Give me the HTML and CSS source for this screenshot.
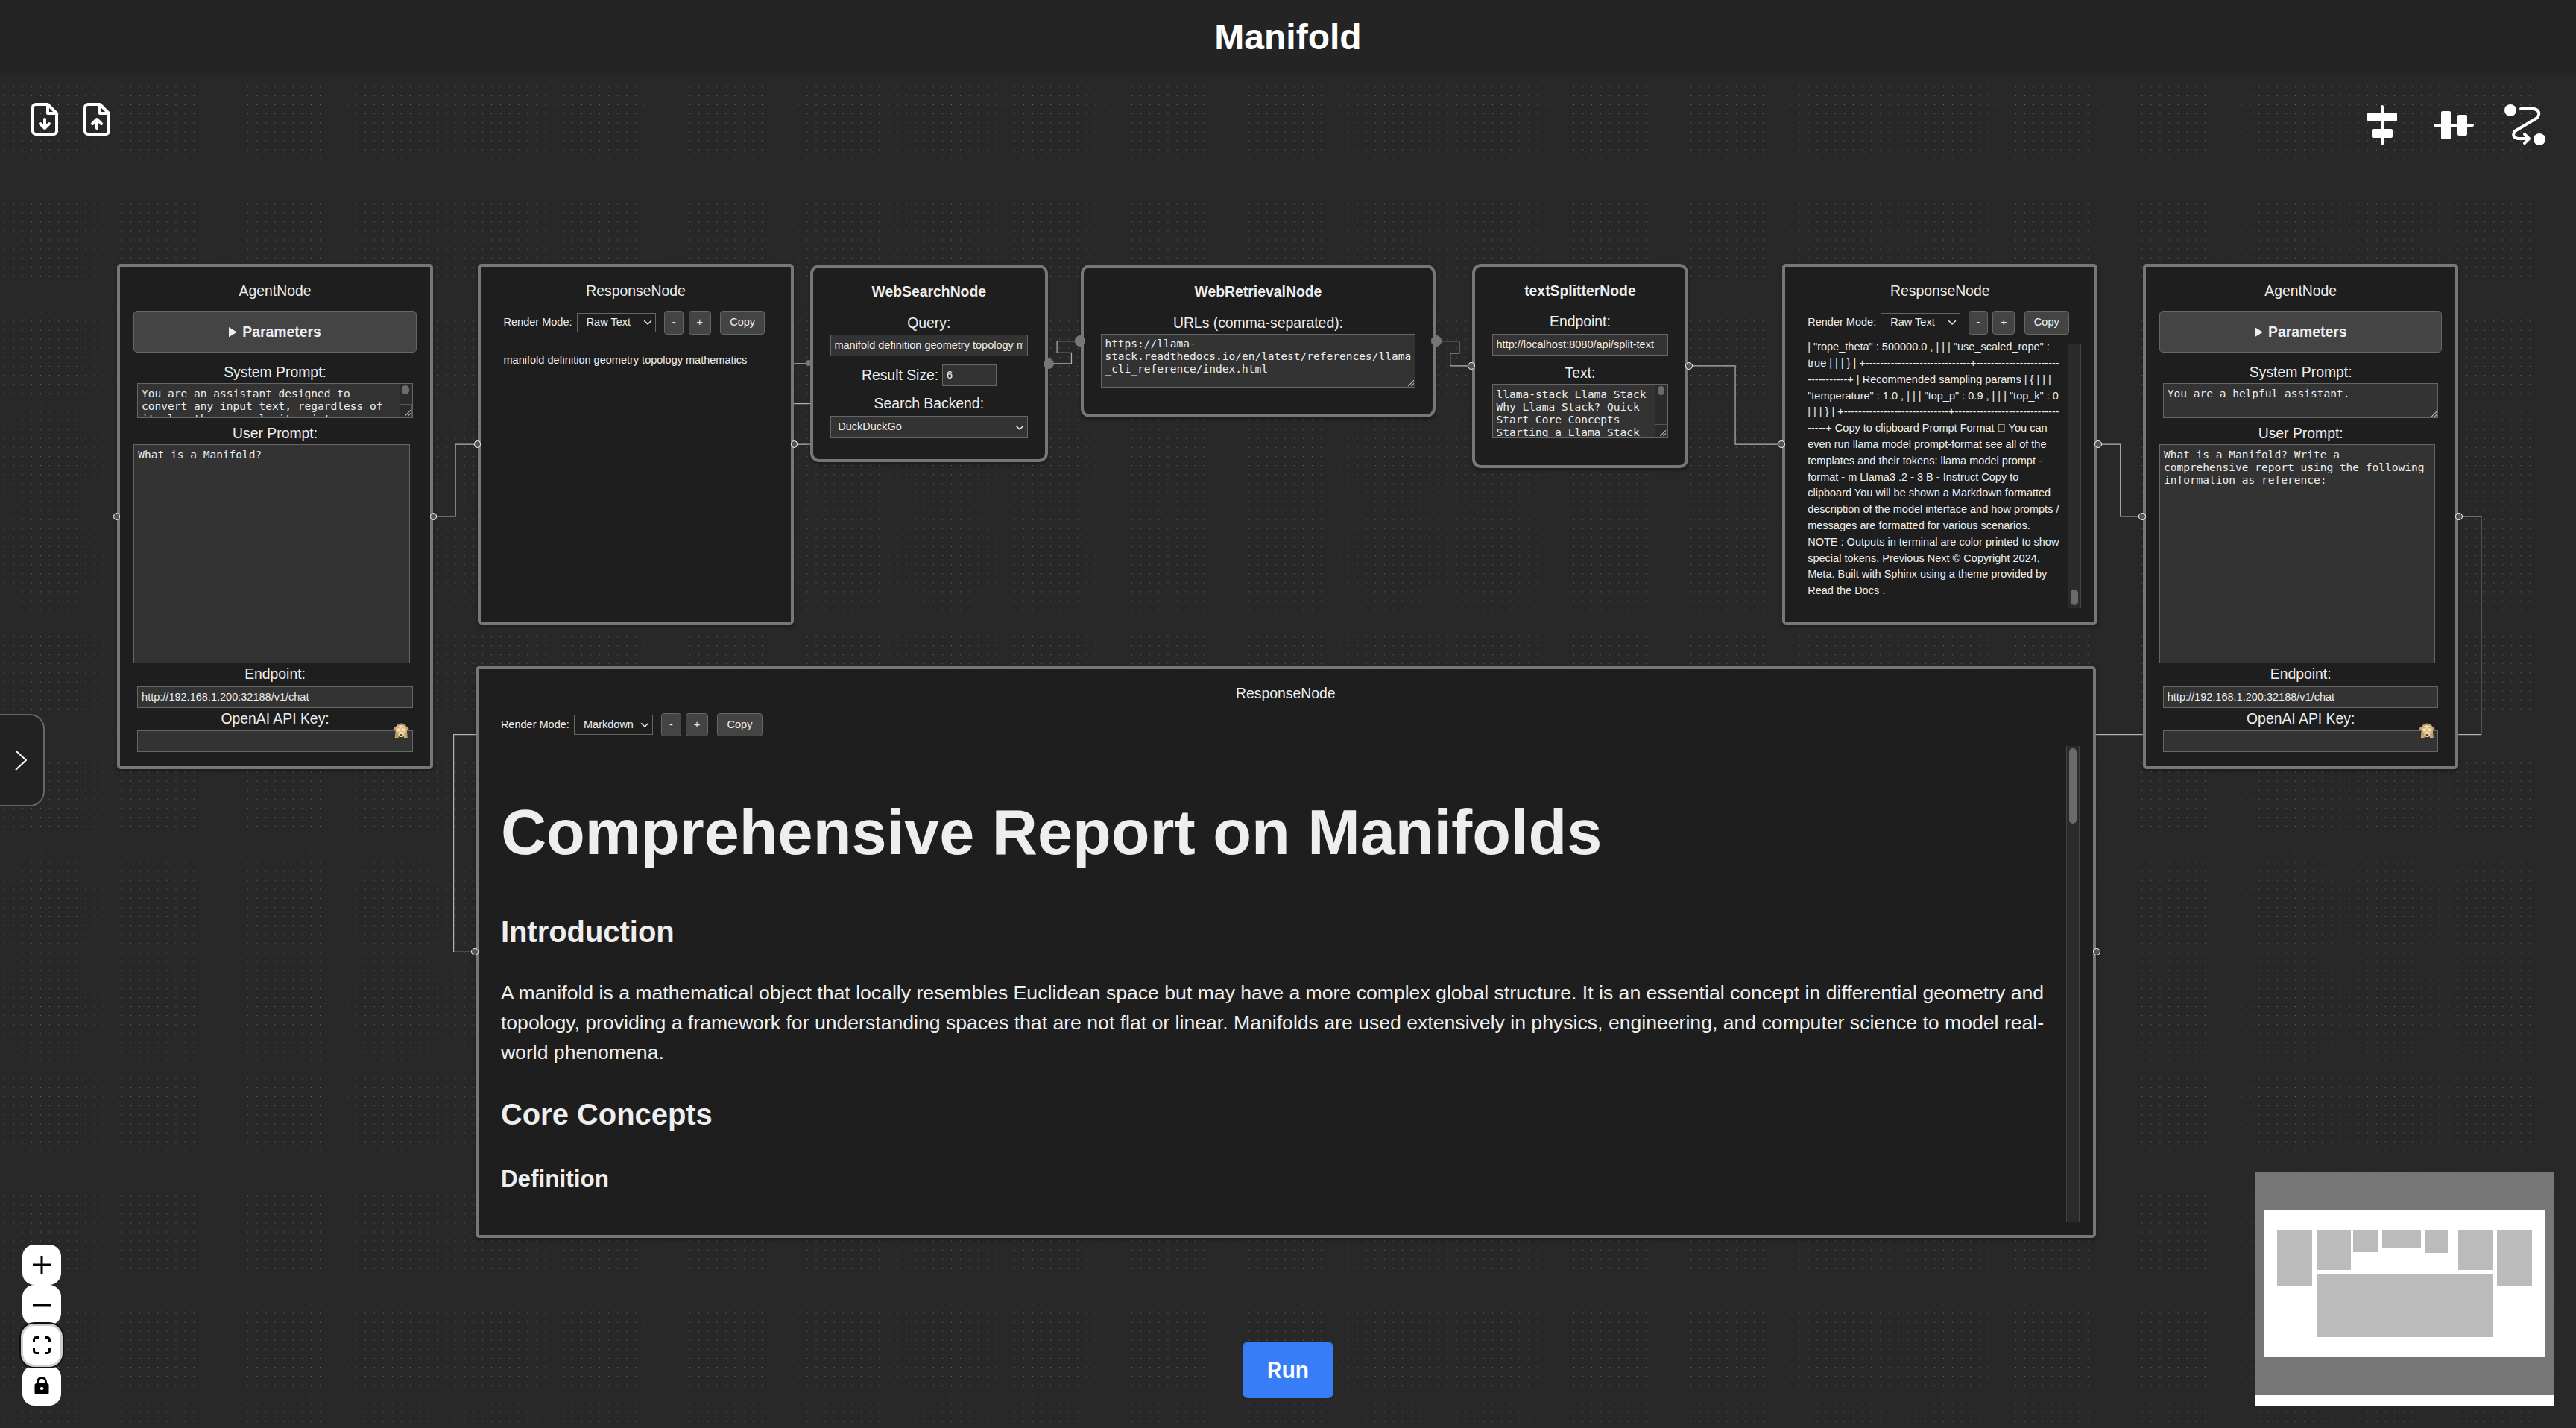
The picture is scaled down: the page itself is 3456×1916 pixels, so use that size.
FILE: index.html
```html
<!DOCTYPE html>
<html lang="en">
<head>
<meta charset="utf-8">
<title>Manifold</title>
<link rel="stylesheet" href="styles.css">
</head>
<body>
<svg class="symbols" aria-hidden="true">
  <symbol id="chevron-down" viewBox="0 0 10 6"><path d="M1 1l4 4 4-4" fill="none" stroke="#eee" stroke-width="1.2"/></symbol>
  <symbol id="grip" viewBox="0 0 8 8"><path d="M1 7.500L7.500 1M4.500 7.500L7.500 4.500" fill="none" stroke="#bbb" stroke-width="0.900"/></symbol>
  <symbol id="triangle" viewBox="0 0 9 11"><path d="M0 0L9 5.500L0 11Z" fill="#eee"/></symbol>
  <symbol id="monkey" viewBox="0 0 20 20">
    <circle cx="2.300" cy="7.500" r="2.300" fill="#d09a86"/><circle cx="17.700" cy="7.500" r="2.300" fill="#d09a86"/>
    <path d="M10 0.500C4.500 0.500 2.500 4 2.500 9c0 5 3 9.500 7.500 9.500s7.500-4.500 7.500-9.500C17.500 4 15.500 .5 10 .5Z" fill="#b8925c"/>
    <path d="M4 5q6-4 12 0v5H4Z" fill="#ecd6a8"/>
    <ellipse cx="10" cy="14.500" rx="4" ry="4" fill="#ecd6a8"/>
    <path d="M7.800 15.500q2.200-1.600 4.400 0q-2.200 2.600-4.400 0Z" fill="#5d3a24"/>
    <path d="M3 6C5 4 8 5 9.500 8L9 11.500 6.500 12.500 6.500 19.500H1.800L2.500 12Z" fill="#d6b177"/>
    <path d="M17 6C15 4 12 5 10.500 8L11 11.500 13.500 12.500 13.500 19.500H18.200L17.500 12Z" fill="#d6b177"/>
    <path d="M4 8q2.500-2 5 0v2.500l-3.500 1ZM16 8q-2.500-2-5 0v2.500l3.500 1Z" fill="#f3e3c2"/>
    <path d="M3.300 13v6M5 13v6M15 13v6M16.700 13v6" stroke="#9b7440" stroke-width=".5"/>
  </symbol>
</svg>

<header class="topbar"><h1 class="brand">Manifold</h1></header>

<main class="canvas">
  <div class="viewport">
    <svg class="wires" aria-hidden="true">
      <defs><pattern id="dots" width="10" height="10" patternUnits="userSpaceOnUse"><circle cx="5" cy="3.500" r="0.500" fill="#777"/></pattern></defs>
      <rect y="10" width="100%" height="100%" fill="url(#dots)"/>
      <g class="edges">
        <path d="M480 490H505V410H530"/>
        <path d="M880 410H900V365H878V320.500H898"/>
        <path d="M1162 320.500H1188V308.500H1172V295.500H1198"/>
        <path d="M1592 295.500H1618V309H1608V323H1632"/>
        <path d="M1872 323H1924V410H1976"/>
        <path d="M2326 410H2351V490H2376"/>
        <path d="M2726 490H2751V732H503V973H527"/>
      </g>
    </svg>

    <section class="node agent" style="left:130px;top:210px">
      <h2 class="node-title">AgentNode</h2>
      <button class="params" type="button"><svg class="tri"><use href="#triangle"/></svg>Parameters</button>
      <label for="sys1">System Prompt:</label>
      <div class="field inset">
        <textarea id="sys1" class="sys">You are an assistant designed to
convert any input text, regardless of
its length or complexity, into a</textarea>
        <span class="bar small"><span class="thumb"></span></span><span class="corner"><svg class="grip"><use href="#grip"/></svg></span>
      </div>
      <label for="usr1">User Prompt:</label>
      <textarea id="usr1" class="usr">What is a Manifold?</textarea>
      <label for="end1">Endpoint:</label>
      <div class="field inset"><input id="end1" type="text" value="http://192.168.1.200:32188/v1/chat"></div>
      <label for="key1">OpenAI API Key:</label>
      <div class="field inset"><input id="key1" type="password"><button class="peek" type="button" aria-label="Show key"><svg><use href="#monkey"/></svg></button></div>
      <i class="handle left"></i><i class="handle right"></i>
    </section>

    <section class="node response" style="left:530px;top:210px">
      <h2 class="node-title">ResponseNode</h2>
      <div class="tools">
        <label for="mode1">Render Mode:</label>
        <span class="select"><select id="mode1"><option>Raw Text</option></select><svg><use href="#chevron-down"/></svg></span>
        <button class="minus" type="button">-</button><button class="plus" type="button">+</button><button class="copy" type="button">Copy</button>
      </div>
      <div class="output">manifold definition geometry topology mathematics</div>
      <i class="handle left"></i><i class="handle right"></i>
    </section>

    <section class="node compact search" style="left:898px;top:211px">
      <h2 class="node-title">WebSearchNode</h2>
      <label for="query">Query:</label>
      <input id="query" type="text" value="manifold definition geometry topology mathematics">
      <div class="pair"><label for="size">Result Size:</label><input id="size" type="text" value="6"></div>
      <label for="backend">Search Backend:</label>
      <span class="select wide"><select id="backend"><option>DuckDuckGo</option></select><svg><use href="#chevron-down"/></svg></span>
      <i class="handle dot tiny left"></i><i class="handle dot right"></i>
    </section>

    <section class="node compact retrieval" style="left:1198px;top:211px">
      <h2 class="node-title">WebRetrievalNode</h2>
      <label for="urls">URLs (comma-separated):</label>
      <div class="field"><textarea id="urls" class="block">https://llama-
stack.readthedocs.io/en/latest/references/llama
_cli_reference/index.html</textarea><svg class="grip"><use href="#grip"/></svg></div>
      <i class="handle dot left"></i><i class="handle dot right"></i>
    </section>

    <section class="node compact splitter" style="left:1632px;top:210px">
      <h2 class="node-title">textSplitterNode</h2>
      <label for="split">Endpoint:</label>
      <input id="split" type="text" value="http://localhost:8080/api/split-text">
      <label for="text" class="spaced">Text:</label>
      <div class="field"><textarea id="text" class="block">llama-stack Llama Stack
Why Llama Stack? Quick
Start Core Concepts
Starting a Llama Stack</textarea>
        <span class="bar small"><span class="thumb"></span></span><span class="corner"><svg class="grip"><use href="#grip"/></svg></span></div>
      <i class="handle left"></i><i class="handle right"></i>
    </section>

    <section class="node response" style="left:1976px;top:210px">
      <h2 class="node-title">ResponseNode</h2>
      <div class="tools">
        <label for="mode2">Render Mode:</label>
        <span class="select"><select id="mode2"><option>Raw Text</option></select><svg><use href="#chevron-down"/></svg></span>
        <button class="minus" type="button">-</button><button class="plus" type="button">+</button><button class="copy" type="button">Copy</button>
      </div>
      <div class="scroll">
        <div class="output end"><p class="raw">| "rope_theta" : 500000.0 , | | | "use_scaled_rope" :
true | | | } | +-----------------------------+-----------------------
-----------+ | Recommended sampling params | { | | |
"temperature" : 1.0 , | | | "top_p" : 0.9 , | | | "top_k" : 0
| | | } | +-----------------------------+-----------------------------
-----+ Copy to clipboard Prompt Format &#xf0c1; You can
even run llama model prompt-format see all of the
templates and their tokens: llama model prompt -
format - m Llama3 .2 - 3 B - Instruct Copy to
clipboard You will be shown a Markdown formatted
description of the model interface and how prompts /
messages are formatted for various scenarios.
NOTE : Outputs in terminal are color printed to show
special tokens. Previous Next © Copyright 2024,
Meta. Built with Sphinx using a theme provided by
Read the Docs .</p></div>
        <div class="track bottom"><span class="thumb"></span></div>
      </div>
      <i class="handle left"></i><i class="handle right"></i>
    </section>

    <section class="node agent" style="left:2376px;top:210px">
      <h2 class="node-title">AgentNode</h2>
      <button class="params" type="button"><svg class="tri"><use href="#triangle"/></svg>Parameters</button>
      <label for="sys2">System Prompt:</label>
      <div class="field inset"><textarea id="sys2" class="sys">You are a helpful assistant.</textarea><svg class="grip"><use href="#grip"/></svg></div>
      <label for="usr2">User Prompt:</label>
      <textarea id="usr2" class="usr">What is a Manifold? Write a
comprehensive report using the following
information as reference:</textarea>
      <label for="end2">Endpoint:</label>
      <div class="field inset"><input id="end2" type="text" value="http://192.168.1.200:32188/v1/chat"></div>
      <label for="key2">OpenAI API Key:</label>
      <div class="field inset"><input id="key2" type="password"><button class="peek" type="button" aria-label="Show key"><svg><use href="#monkey"/></svg></button></div>
      <i class="handle left"></i><i class="handle right"></i>
    </section>

    <section class="node response report" style="left:527px;top:656px">
      <h2 class="node-title">ResponseNode</h2>
      <div class="tools">
        <label for="mode3">Render Mode:</label>
        <span class="select"><select id="mode3"><option>Markdown</option></select><svg><use href="#chevron-down"/></svg></span>
        <button class="minus" type="button">-</button><button class="plus" type="button">+</button><button class="copy" type="button">Copy</button>
      </div>
      <div class="scroll">
        <article class="output markdown">
          <h1>Comprehensive Report on Manifolds</h1>
          <h2>Introduction</h2>
          <p>A manifold is a mathematical object that locally resembles Euclidean space but may have a more complex global structure. It is an essential concept in differential geometry and topology, providing a framework for understanding spaces that are not flat or linear. Manifolds are used extensively in physics, engineering, and computer science to model real-world phenomena.</p>
          <h2>Core Concepts</h2>
          <h3>Definition</h3>
        </article>
        <div class="track"><span class="thumb long"></span></div>
      </div>
      <i class="handle left"></i><i class="handle right"></i>
    </section>
  </div>

  <div class="files">
    <button class="icon" type="button" aria-label="Save"><svg viewBox="0 0 24 24"><path d="M14 2H6a2 2 0 0 0-2 2v16a2 2 0 0 0 2 2h12a2 2 0 0 0 2-2V8ZM14 2v6h6M12 12v6M9 15l3 3 3-3"/></svg></button>
    <button class="icon" type="button" aria-label="Load"><svg viewBox="0 0 24 24"><path d="M14 2H6a2 2 0 0 0-2 2v16a2 2 0 0 0 2 2h12a2 2 0 0 0 2-2V8ZM14 2v6h6M12 18v-6M9 15l3-3 3 3"/></svg></button>
  </div>

  <div class="layouts">
    <button class="icon" type="button" aria-label="Layout vertically"><svg class="solid" viewBox="0 0 56 56"><rect x="26" y="1" width="4" height="54" rx="2"/><rect x="8" y="11" width="40" height="12" rx="2"/><rect x="14" y="33" width="28" height="12" rx="2"/></svg></button>
    <button class="icon" type="button" aria-label="Layout horizontally"><svg class="solid" viewBox="0 0 56 56"><rect x="1" y="26" width="54" height="4" rx="2"/><rect x="11" y="9" width="13" height="38" rx="2"/><rect x="33" y="14" width="13" height="28" rx="2"/></svg></button>
    <button class="icon" type="button" aria-label="Route edges"><svg viewBox="0 0 56 56"><circle cx="8" cy="8" r="8" fill="#fff" stroke="none"/><circle cx="47" cy="47" r="8" fill="#fff" stroke="none"/><path stroke-width="4" d="M22 6h18q10 3 4 12L14 36q-5 8 4 10h14M27 40l6 6-6 6"/></svg></button>
  </div>

  <button class="drawer" type="button" aria-label="Open palette"><svg viewBox="0 0 16 28"><path d="M1 1l14 13L1 27"/></svg></button>

  <div class="zoomer">
    <button type="button" aria-label="Zoom in"><svg viewBox="0 0 24 24"><path d="M0 10.500h10.500V0h3v10.500H24v3H13.500V24h-3V13.500H0z"/></svg></button>
    <button type="button" aria-label="Zoom out"><svg viewBox="0 0 24 24"><path d="M0 10.500h24v3H0z"/></svg></button>
    <button type="button" class="focused" aria-label="Fit view"><svg viewBox="0 0 24 24"><path d="M1.500 8V4.500a3 3 0 0 1 3-3H8M16 1.500h3.500a3 3 0 0 1 3 3V8M22.500 16v3.500a3 3 0 0 1-3 3H16M8 22.500H4.500a3 3 0 0 1-3-3V16" fill="none" stroke="#000" stroke-width="3"/></svg></button>
    <button type="button" aria-label="Lock"><svg viewBox="0 0 24 24"><path fill-rule="evenodd" d="M5 9V7a7 7 0 0 1 14 0v2q2.500 0 2.500 2.500V21.500Q21.500 24 19 24H5Q2.500 24 2.500 21.500V11.500Q2.500 9 5 9ZM8 9h8V7a4 4 0 0 0-8 0ZM12 14a2.500 2 0 1 0 .1 0Z"/></svg></button>
  </div>

  <button class="run" type="button">Run</button>

  <div class="minimap">
    <svg viewBox="0 0 400 300" aria-label="Mini map">
      <rect width="400" height="300" fill="#777"/>
      <rect x="12" y="52" width="376" height="197" fill="#fff"/>
      <g fill="#bbb">
        <rect x="29" y="79" width="47" height="74"/><rect x="82" y="79" width="46" height="53"/>
        <rect x="131" y="79" width="34" height="29"/><rect x="170" y="79" width="52" height="23"/>
        <rect x="227" y="79" width="31" height="30"/><rect x="272" y="79" width="46" height="53"/>
        <rect x="324" y="79" width="47" height="74"/><rect x="82" y="138" width="236" height="84"/>
      </g>
    </svg>
  </div>
</main>
</body>
</html>
```
FILE: styles.css
```css
* { box-sizing: border-box; }

body {
  margin: 0;
  min-height: 100vh;
  display: flex;
  flex-direction: column;
  background: #242424;
  color: #eee;
  font-family: "Liberation Sans", Arial, sans-serif;
}

button, input, select, textarea { font: inherit; color: inherit; margin: 0; }
button { cursor: pointer; }
.symbols { position: absolute; width: 0; height: 0; }

.topbar {
  display: flex;
  align-items: center;
  justify-content: center;
  height: 100px;
}
.brand { margin: 0; font-size: 48px; line-height: 56px; color: #fff; }

.canvas {
  flex: 1;
  position: relative;
  overflow: hidden;
  background: #282828;
}

/* Current zoom level of the flow editor; nodes use flow coordinates. */
.viewport { position: absolute; inset: 0; zoom: 1.21; font-size: 16px; line-height: 24px; }
.wires { position: absolute; width: 100%; height: 100%; }
.edges path { fill: none; stroke: #b1b1b7; stroke-width: 1; }

/* Nodes */
.node {
  position: absolute;
  display: flex;
  flex-direction: column;
  padding: 15px;
  background: #1e1e1e;
  border: 4px solid #777;
  border-radius: 4px;
  box-shadow: 0 2px 4px rgba(0, 0, 0, 0.3);
}
.node-title { margin: 0 0 10px; font-size: 16px; line-height: 24px; font-weight: 400; text-align: center; }
.node label { display: block; text-align: center; }
.agent { width: 350px; height: 560px; }
.response { width: 350px; height: 400px; }
.report { width: 1797px; height: 634px; }

.compact { padding: 15px 19px; border-radius: 10px; }
.compact .node-title { font-weight: 700; }
.search { width: 264px; height: 219px; }
.retrieval { width: 394px; height: 169px; }
.splitter { width: 240px; height: 226px; }
.spaced { margin-top: 8px; }

input, textarea {
  display: block;
  width: 100%;
  padding: 4px;
  border: 1px solid #666;
  border-radius: 0;
  background: #333;
  outline: 0;
  font-size: 12px;
}
input { height: 24px; line-height: 14px; padding: 1px 4px; margin-top: 1px; }
textarea {
  font-family: "DejaVu Sans Mono", monospace;
  line-height: 14px;
  resize: none;
  overflow: hidden;
  white-space: pre;
}
.field { position: relative; }
.inset { margin: 0 4px; }

.params {
  display: flex;
  align-items: center;
  justify-content: center;
  gap: 6px;
  height: 46px;
  margin-bottom: 10px;
  background: #444;
  border: 1px solid #666;
  border-radius: 4px;
  font-weight: 700;
}
.tri { width: 9px; height: 11px; }
.sys { height: 39px; }
.inset:has(.sys) { margin-bottom: 5px; }
.usr { width: 306px; height: 243px; }
.block { height: 60px; }

.peek {
  position: absolute;
  right: 4px;
  top: -7px;
  padding: 0;
  border: 0;
  background: none;
  line-height: 0;
}
.peek svg { width: 17px; height: 17px; }

.grip { position: absolute; right: 1px; bottom: 1px; width: 8px; height: 8px; }
.bar.small {
  position: absolute;
  top: 1px;
  right: 1px;
  bottom: 15px;
  width: 14px;
  background: #2b2b2b;
}
.small .thumb { display: block; width: 8px; height: 10px; margin: 1px auto; border-radius: 4px; background: #6b6b6b; }
.corner { position: absolute; right: 1px; bottom: 1px; width: 14px; height: 15px; background: #2b2b2b; border: 1px solid #555; }
.corner .grip { right: 0; bottom: 0; }

.pair { display: flex; justify-content: center; align-items: center; gap: 4px; margin: 9px 0 8px; }
.pair input { width: 60px; margin: 0; }

.select { position: relative; display: block; }
.select select {
  appearance: none;
  display: block;
  width: 88px;
  height: 22px;
  padding: 0 10px;
  border: 1px solid #666;
  border-radius: 0;
  background: #1e1e1e;
  font-size: 12px;
  line-height: 18px;
}
.select svg { position: absolute; right: 4px; top: 8px; width: 10px; height: 6px; pointer-events: none; }
.wide select { width: 100%; height: 25px; margin-top: 1px; background: #333; padding: 0 8px; }
.wide svg { top: 11px; }

.tools { display: flex; align-items: center; height: 26px; margin-bottom: 10px; padding-left: 10px; font-size: 12px; line-height: 18px; }
.tools label { margin-right: 6px; width: 75px; white-space: nowrap; text-align: left; }
.tools button { height: 26px; padding: 0; background: #444; border: 1px solid #666; border-radius: 3px; }
.tools .minus { width: 22px; margin-left: 9px; }
.tools .plus { width: 25px; margin: 0 10px 0 5px; }
.tools .copy { width: 50px; }

.scroll { flex: 1; min-height: 0; display: flex; }
.output { flex: 1; min-width: 0; padding: 10px; font-size: 12px; line-height: 18px; overflow: hidden; }
.end { display: flex; flex-direction: column; justify-content: flex-end; margin-top: -4px; }
.raw { margin: 0; white-space: pre; }
.track { width: 15px; padding: 3px 0; background: #2b2b2b; border: 1px solid #444; border-width: 0 1px; }
.track.bottom { display: flex; align-items: flex-end; }
.track .thumb { display: block; width: 8px; height: 18px; margin: 0 auto; border-radius: 4px; background: #6b6b6b; }
.track .long { height: 83px; }

.markdown { font-size: 22px; line-height: 33px; }
.markdown h1 { margin: 47px 0; font-size: 70px; line-height: 77px; }
.markdown h2 { margin: 27px 0; font-size: 33px; line-height: 50px; }
.markdown h3 { margin: 27px 0; font-size: 26px; line-height: 39px; }
.markdown p { margin: 22px 0; }

/* Connection points sit across the node's edge. */
.handle {
  position: absolute;
  top: 50%;
  width: 8px;
  height: 8px;
  margin: -4px;
  border: 1px solid #fff;
  border-radius: 50%;
  background: #555;
}
.handle.left { left: -4px; }
.handle.right { right: -4px; }
.handle.dot { width: 12px; height: 12px; margin: -6px; background: #777; border-color: #777; }
.handle.dot.tiny { width: 7px; height: 7px; margin: -4px; }

/* Panels over the canvas */
.icon { padding: 0; border: 0; background: none; line-height: 0; }
.icon svg { fill: none; stroke: #fff; stroke-width: 2; stroke-linecap: round; stroke-linejoin: round; }
.icon .solid { fill: #fff; stroke: none; }
.files { position: absolute; left: 36px; top: 36px; display: flex; gap: 22px; }
.files svg { width: 48px; height: 48px; }
.layouts { position: absolute; right: 40px; top: 40px; display: flex; gap: 40px; }
.layouts svg { width: 56px; height: 56px; }

.drawer {
  position: absolute;
  left: 0;
  top: 858px;
  width: 60px;
  height: 124px;
  padding: 0 0 0 20px;
  border: 2px solid #666;
  border-left: 0;
  border-radius: 0 20px 20px 0;
  background: #222;
  text-align: left;
}
.drawer svg { width: 16px; height: 28px; fill: none; stroke: #fff; stroke-width: 2; vertical-align: middle; }

.zoomer { position: absolute; left: 30px; bottom: 30px; display: flex; flex-direction: column; }
.zoomer button {
  display: flex;
  align-items: center;
  justify-content: center;
  width: 52px;
  height: 54px;
  padding: 0;
  border: 0;
  border-radius: 16px;
  background: #fff;
}
.zoomer svg { width: 24px; height: 24px; }
.zoomer .focused { z-index: 1; box-shadow: inset 0 0 0 1px #ccc, 0 0 0 2px #ccc, 0 0 0 4px #111; }

.run {
  position: absolute;
  left: 50%;
  bottom: 40px;
  width: 122px;
  height: 76px;
  margin-left: -61px;
  border: 0;
  border-radius: 8px;
  background: #387df8;
  color: #fff;
  font-family: Inter, "Liberation Sans", sans-serif;
  font-size: 30px;
  font-weight: 600;
}

.minimap { position: absolute; right: 30px; bottom: 30px; width: 400px; padding-bottom: 14px; background: #fff; }
.minimap svg { display: block; width: 100%; }
```
